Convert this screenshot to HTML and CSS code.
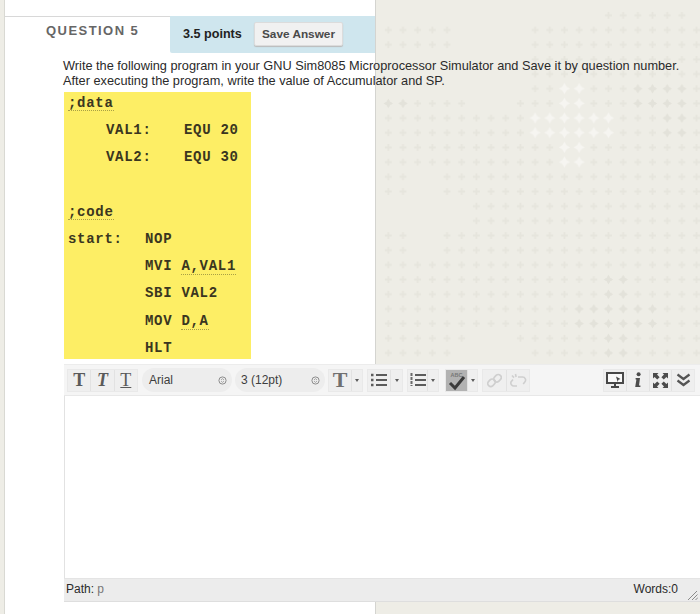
FILE: index.html
```html
<!DOCTYPE html>
<html lang="en">
<head>
<meta charset="utf-8">
<title>Question 5</title>
<link rel="stylesheet" href="styles.css">
</head>
<body>
<svg class="backdrop" width="700" height="614" aria-hidden="true">
  <defs>
    <pattern id="dots" x="381" y="8" width="14.68" height="14.68" patternUnits="userSpaceOnUse">
      <path d="M6.4 3.8h1.8v2.6h2.6v1.8H8.2v2.6H6.4V8.2H3.8V6.4h2.6z" fill="#e6e5dd"/>
    </pattern>
    <pattern id="big" x="381" y="8" width="14.68" height="14.68" patternUnits="userSpaceOnUse">
      <path d="M7.3 2.4 9 5.6 12.2 7.3 9 9 7.3 12.2 5.6 9 2.4 7.3 5.6 5.6Z" fill="#e3e2da"/>
    </pattern>
    <pattern id="bright" x="381" y="8" width="14.68" height="14.68" patternUnits="userSpaceOnUse">
      <path d="M7.3 1.8 9.4 5.2 12.8 7.3 9.4 9.4 7.3 12.8 5.2 9.4 1.8 7.3 5.2 5.2Z" fill="#f6f5f1"/>
    </pattern>
  </defs>
  <rect x="601" y="8" width="88" height="14.7" fill="url(#dots)"/>
  <rect x="381" y="22.7" width="73.4" height="29.3" fill="url(#dots)"/>
  <rect x="527.8" y="22.7" width="172.2" height="73.3" fill="url(#dots)"/>
  <rect x="381" y="96" width="88" height="14.8" fill="url(#dots)"/>
  <rect x="513" y="96" width="187" height="14.8" fill="url(#dots)"/>
  <rect x="381" y="110.8" width="319" height="58.7" fill="url(#dots)"/>
  <rect x="381" y="169.5" width="29.4" height="29.3" fill="url(#dots)"/>
  <rect x="439.7" y="169.5" width="260.3" height="29.3" fill="url(#dots)"/>
  <rect x="469" y="198.8" width="231" height="29.2" fill="url(#dots)"/>
  <rect x="381" y="228" width="29.4" height="29.6" fill="url(#dots)"/>
  <rect x="439.7" y="228" width="260.3" height="29.6" fill="url(#dots)"/>
  <rect x="381" y="257.6" width="319" height="73.4" fill="url(#dots)"/>
  <rect x="381" y="331" width="88" height="14.6" fill="url(#dots)"/>
  <rect x="513" y="331" width="187" height="14.6" fill="url(#dots)"/>
  <rect x="381" y="345.6" width="73.4" height="14.7" fill="url(#dots)"/>
  <rect x="527.8" y="345.6" width="172.2" height="14.7" fill="url(#dots)"/>

  <rect x="381" y="96" width="29.4" height="14.8" fill="url(#big)"/>
  <rect x="630.6" y="81.4" width="58.7" height="29.4" fill="url(#big)"/>
  <rect x="660" y="110.8" width="29.3" height="29.2" fill="url(#big)"/>
  <rect x="601" y="272" width="29.6" height="29.6" fill="url(#big)"/>
  <rect x="571.8" y="301.6" width="88.2" height="29.4" fill="url(#big)"/>
  <rect x="601" y="331" width="29.6" height="29.3" fill="url(#big)"/>

  <rect x="557" y="81.4" width="29.5" height="29.4" fill="url(#bright)"/>
  <rect x="527.8" y="110.8" width="88.1" height="29.2" fill="url(#bright)"/>
  <rect x="557" y="140" width="29.5" height="29.5" fill="url(#bright)"/>
</svg>
<div class="edge"></div>
<main class="card">
  <div class="head">
    <h2 class="qlabel">QUESTION 5</h2>
    <div class="tab">
      <span class="points">3.5 points</span>
      <button class="save" type="button">Save Answer</button>
    </div>
  </div>
  <div class="content">
    <p class="prompt">Write the following program in your GNU Sim8085 Microprocessor Simulator and Save it by question number.<br>After executing the program, write the value of Accumulator and SP.</p>
    <div class="code">
      <div class="row"><span class="wavy">;data</span></div>
      <div class="row"><span class="c-label ind">VAL1:</span><span>EQU 20</span></div>
      <div class="row"><span class="c-label ind">VAL2:</span><span>EQU 30</span></div>
      <div class="row"></div>
      <div class="row"><span class="wavy">;code</span></div>
      <div class="row"><span class="c-start">start:</span><span>NOP</span></div>
      <div class="row"><span class="c-start"></span><span>MVI <span class="wavy">A,VAL1</span></span></div>
      <div class="row"><span class="c-start"></span><span>SBI VAL2</span></div>
      <div class="row"><span class="c-start"></span><span>MOV <span class="wavy">D,A</span></span></div>
      <div class="row"><span class="c-start"></span><span>HLT</span></div>
    </div>
    <div class="editor">
      <div class="toolbar">
        <div class="group g-style">
          <span class="btn t t-b">T</span>
          <span class="btn t t-i">T</span>
          <span class="btn t t-u">T</span>
        </div>
        <div class="select sel-font"><span>Arial</span><svg width="9" height="9" viewBox="0 0 9 9"><circle cx="4.5" cy="4.5" r="3.6" fill="none" stroke="#8c8c8c"/><path d="M3 4 4.5 2.6 6 4M3 5 4.5 6.4 6 5" fill="none" stroke="#8c8c8c" stroke-width=".7"/></svg></div>
        <div class="select sel-size"><span>3 (12pt)</span><svg width="9" height="9" viewBox="0 0 9 9"><circle cx="4.5" cy="4.5" r="3.6" fill="none" stroke="#8c8c8c"/><path d="M3 4 4.5 2.6 6 4M3 5 4.5 6.4 6 5" fill="none" stroke="#8c8c8c" stroke-width=".7"/></svg></div>
        <div class="group g-color">
          <span class="btn t t-c">T</span><span class="caret"></span>
        </div>
        <div class="group g-bul">
          <span class="btn ic"><svg width="16" height="14" viewBox="0 0 16 14"><path d="M0 2h2.5M0 7h2.5M0 12h2.5" stroke="#5c5c5c" stroke-width="2.4"/><path d="M5 2h11M5 7h11M5 12h11" stroke="#5c5c5c" stroke-width="1.8"/></svg></span><span class="caret"></span>
        </div>
        <div class="group g-num">
          <span class="btn ic"><svg width="16" height="16" viewBox="0 0 16 16"><path d="M1.5 1v13" stroke="#6a6a6a" stroke-width="2" stroke-dasharray="3 1"/><path d="M5 3h11M5 8h11M5 13h11" stroke="#5c5c5c" stroke-width="1.8"/></svg></span><span class="caret"></span>
        </div>
        <div class="group g-spell">
          <span class="btn ic spell"><svg width="21" height="21" viewBox="0 0 21 21"><text class="abc" x="10.5" y="7" text-anchor="middle">ABC</text><path d="M4 13 9 18 18 7" fill="none" stroke="#3a3a3a" stroke-width="3"/></svg></span><span class="caret"></span>
        </div>
        <div class="group g-link">
          <span class="btn ic"><svg width="15" height="15" viewBox="0 0 15 15"><g fill="none" stroke="#cfcfcf" stroke-width="1.7"><rect x="7.5" y="1.2" width="6" height="8" rx="3" transform="rotate(45 10.5 5.2)"/><rect x="1.5" y="5.8" width="6" height="8" rx="3" transform="rotate(45 4.5 9.8)"/></g></svg></span>
          <span class="btn ic"><svg width="18" height="15" viewBox="0 0 18 15"><path d="M9 4h4.5a3 3 0 0 1 2.3 5l-1.6 2M8 13H5a3 3 0 0 1-3-4l2-2.5M6.5 1l.6 3M3 2.5 5 4.6" fill="none" stroke="#cfcfcf" stroke-width="1.6"/></svg></span>
        </div>
        <div class="group g-right">
          <span class="btn ic"><svg width="18" height="16" viewBox="0 0 18 16"><path d="M1 1h16v10H1z" fill="#fafafa" stroke="#484848" stroke-width="2"/><path d="M5 15h8M9 11v4" stroke="#484848" stroke-width="2"/><path d="M10 4.500 14.500 7 12.400 7.700 11.700 10z" fill="#484848"/></svg></span>
          <span class="btn ic"><svg width="8" height="16" viewBox="0 0 8 16"><circle cx="4.6" cy="2.2" r="2" fill="#4c4c4c"/><path d="M1.6 6H6L5 13.500H6.400V15H1.200L2.400 7.400H1.600z" fill="#4c4c4c"/></svg></span>
          <span class="btn ic"><svg width="15" height="15" viewBox="0 0 15 15"><path d="M0 0h5.500L4 1.600 6.600 4.200 4.200 6.600 1.600 4 0 5.500zM15 0v5.500L13.400 4 10.800 6.600 8.400 4.200 11 1.600 9.500 0zM0 15V9.500L1.600 11 4.200 8.400 6.600 10.800 4 13.400 5.500 15zM15 15H9.500L11 13.400 8.400 10.800 10.800 8.400 13.400 11 15 9.500z" fill="#4c4c4c"/></svg></span>
          <span class="btn ic"><svg width="15" height="14" viewBox="0 0 15 14"><path d="M1.500 1.500 7.500 6 13.500 1.500M1.500 7.500 7.500 12 13.500 7.500" fill="none" stroke="#555" stroke-width="2.200"/></svg></span>
        </div>
      </div>
      <div class="area"></div>
      <div class="status">
        <span class="path">Path: <span class="path-p">p</span></span>
        <span class="words">Words:0</span>
        <svg class="grip" width="11" height="11" viewBox="0 0 11 11"><path d="M1 11 10 2M5 11 10.500 5.500M8.500 11 11 8.500" stroke="#8a8a8a"/></svg>
      </div>
    </div>
  </div>
</main>
</body>
</html>
```

FILE: styles.css
```css
* { box-sizing: border-box; }
html, body { margin: 0; padding: 0; }
body {
  position: relative;
  display: flex;
  width: 700px;
  height: 614px;
  overflow: hidden;
  background: #eeede6;
  font-family: "Liberation Sans", Arial, sans-serif;
  color: #2b2b2b;
}
.backdrop { position: absolute; left: 0; top: 0; }
.edge { width: 5px; flex: none; }
.card {
  position: relative;
  width: 371px;
  height: 614px;
  flex: none;
  padding-top: 16px;
  background: #fff;
  border-right: 1px solid #d4d4d0;
  box-shadow: -1px 0 0 #d9d9d3;
}
.head {
  display: flex;
  height: 37px;
  border-top: 1px solid #d8d8d8;
}
.qlabel {
  width: 165px;
  margin: 0;
  padding: 5px 0 0 41px;
  font-size: 13px;
  line-height: 17px;
  font-weight: 700;
  letter-spacing: 1.45px;
  color: #666;
}
.tab {
  display: flex;
  align-items: center;
  gap: 13px;
  width: 205px;
  margin-top: -1px;
  padding: 0 0 2px 13px;
  background: #cfe6ee;
  border-bottom-left-radius: 2px;
}
.points { width: 58px; font-size: 12.6px; font-weight: 700; color: #222; white-space: nowrap; }
.save {
  width: 89px;
  height: 24px;
  padding: 0;
  border: 1px solid #dcdcdc;
  border-radius: 2px;
  background: #f1f1f1;
  font: 700 11.8px "Liberation Sans", Arial, sans-serif;
  color: #4a4a4a;
  box-shadow: 0 1px 1px #bbb;
}
.content {
  position: relative;
  width: 637px;
  margin-left: 58px;
}
.prompt {
  margin: 5px 0 0;
  font-size: 12.75px;
  line-height: 15px;
  white-space: nowrap;
  color: #2a2a2a;
}
.code {
  width: 187px;
  height: 267px;
  margin: 4px 0 0 1px;
  padding-left: 4px;
  background: #fdee65;
  font-family: "Liberation Mono", "Courier New", monospace;
  font-weight: 700;
  font-size: 14px;
  letter-spacing: 0.7px;
  color: #3a3620;
}
.row {
  display: flex;
  flex: none;
  height: 27.2px;
  line-height: 23px;
  white-space: pre;
}
.wavy { height: 19px; border-bottom: 1px dotted #a9a045; }
.c-label { width: 78px; }
.ind { margin-left: 38px; }
.c-start { width: 77px; }
.editor {
  width: 636px;
  margin: 5px 0 0 1px;
}
.toolbar {
  display: flex;
  align-items: center;
  height: 32px;
  padding-left: 3px;
  background: #f5f5f5;
  border-top: 1px solid #ececec;
  border-bottom: 1px solid #e8e8e8;
}
.group {
  display: flex;
  flex: none;
  height: 23px;
  background: #efefef;
  border: 1px solid #e9e9e9;
}
.g-style { width: 71px; }
.g-color { width: 35px; margin-left: 3px; }
.g-bul { width: 36px; margin-left: 4px; }
.g-num { width: 32px; margin-left: 4px; }
.g-spell { width: 33px; margin-left: 6px; }
.g-link { width: 48px; margin-left: 4px; }
.g-right { width: 92px; margin-left: auto; margin-right: 5px; }
.btn {
  display: flex;
  flex: 1 1 0;
  align-items: center;
  justify-content: center;
  height: 21px;
  border-right: 1px solid #e2e2e2;
}
.btn:last-child { border-right: 0; }
.t {
  font-family: "Liberation Serif", serif;
  font-weight: 700;
  font-size: 18px;
  color: #5a5a5a;
}
.t-i { font-style: italic; }
.t-u { text-decoration: underline; font-weight: 400; }
.t-c { font-size: 22px; color: #707070; }
.g-color .btn, .g-bul .btn, .g-num .btn, .g-spell .btn { flex: none; }
.g-color .btn, .g-bul .btn { width: 23px; }
.g-num .btn { width: 20px; }
.g-spell .btn { width: 22px; }
.caret {
  display: flex;
  flex: 1;
  align-items: center;
  justify-content: center;
}
.caret::after {
  content: "";
  margin-top: 3px;
  border: 2.5px solid transparent;
  border-top: 3px solid #5c5c5c;
}
.select {
  display: flex;
  flex: none;
  align-items: center;
  justify-content: space-between;
  width: 90px;
  height: 24px;
  padding: 0 5px 0 7px;
  border-radius: 12px;
  background: #ededed;
  font-size: 12px;
  color: #3d3d3d;
}
.sel-font { margin-left: 4px; }
.sel-size { margin-left: 3px; padding-left: 6px; }
.spell { background: #b2b2b2; height: 21px; }
.abc { font: 700 5.5px "Liberation Sans", Arial, sans-serif; fill: #777; }
.area {
  height: 182px;
  background: #fff;
  border-left: 1px solid #e2e2e2;
}
.status {
  position: relative;
  display: flex;
  justify-content: space-between;
  align-items: center;
  height: 24px;
  padding: 0 22px 2px 2px;
  background: #ececec;
  border-top: 1px solid #e4e4e4;
  border-bottom: 1px solid #dedede;
  font-size: 12px;
  color: #2a2a2a;
}
.path-p { color: #777; }
.grip { position: absolute; right: 2px; bottom: 1px; }
```
